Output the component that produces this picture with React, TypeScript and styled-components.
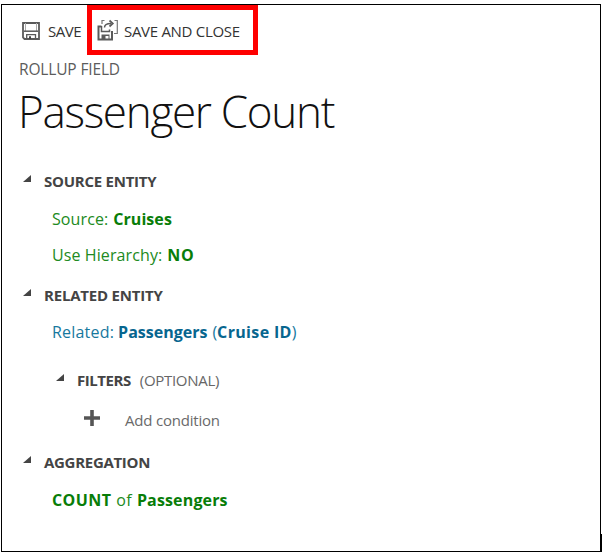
import styled, { createGlobalStyle } from "styled-components";

const GlobalStyle = createGlobalStyle`
  body {
    margin: 0;
    background-color: #fff;
    font-family: "Open Sans", "Noto Sans", sans-serif;
  }
`;

interface TextProps {
  $spacing?: number;
  $gap?: number;
}

const SaveIcon = () => (
  <svg width="18" height="18" viewBox="0 0 18 18" fill="none">
    <path d="M1 1H17V17H2.5L1 15.5Z" stroke="#5a5a5a" strokeWidth="1.8" />
    <path d="M3.5 1V9" stroke="#aaa" strokeWidth="1" />
    <path d="M14.5 1V9" stroke="#aaa" strokeWidth="1" />
    <path d="M2 9.2H16" stroke="#5a5a5a" strokeWidth="1.5" />
    <path d="M4.7 17V12.7H13.5V17" stroke="#5a5a5a" strokeWidth="1.3" />
    <path d="M7 14.3H9V17H7Z" fill="#444" />
  </svg>
);

const SaveCloseIcon = () => (
  <svg width="22" height="22" viewBox="0 0 22 22" fill="none">
    <path d="M4.5 7.5H1.5V20.5H15V12" stroke="#5a5a5a" strokeWidth="2" />
    <path d="M4.5 7V12.5H12.5V10.5" stroke="#5a5a5a" strokeWidth="1.5" />
    <path d="M4.5 20V15.5H12.5V20Z" fill="#5a5a5a" />
    <path d="M8.5 17H11.5V19.5H8.5Z" fill="#fff" />
    <path d="M5 5V1.5H7.5M17.5 1.5H20.3V14.5H17" stroke="#777" strokeWidth="1.2" />
    <path d="M7.5 8.5C7.5 6 9.5 4.5 14 4.5" stroke="#5a5a5a" strokeWidth="1.5" />
    <path d="M12.5 1.5L15.8 4.5L12.5 7.5" stroke="#5a5a5a" strokeWidth="1.7" />
  </svg>
);

const Arrow = () => (
  <svg width="8" height="7" viewBox="0 0 8 7">
    <path d="M8 0V7H0Z" fill="#444" />
  </svg>
);

const App = () => {
  return (
    <Page>
      <GlobalStyle />
      <Panel>
        <Toolbar>
          <ToolButton>
            <SaveIcon />
            <Label $spacing={-0.45}>SAVE</Label>
          </ToolButton>
          <ToolButton className="highlighted">
            <SaveCloseIcon />
            <Label $spacing={-0.3}>SAVE AND CLOSE</Label>
          </ToolButton>
        </Toolbar>
        <Caption>ROLLUP FIELD</Caption>
        <Title>Passenger Count</Title>

        <Heading $top={28}>
          <Arrow />
          <Strong $spacing={-0.25}>SOURCE ENTITY</Strong>
        </Heading>
        <Value $top={14}>
          <Label $spacing={0.1}>Source:</Label>
          <Strong $gap={5} $spacing={0.05}>Cruises</Strong>
        </Value>
        <Value $top={12}>
          <Label $spacing={0.1}>Use Hierarchy:</Label>
          <Strong $gap={5} $spacing={0.7}>NO</Strong>
        </Value>

        <Heading $top={16}>
          <Arrow />
          <Strong $spacing={-0.2}>RELATED ENTITY</Strong>
        </Heading>
        <Value $top={13} className="related">
          <Label $spacing={0.2}>Related:</Label>
          <Strong $gap={4} $spacing={0}>Passengers</Strong>
          <Label $gap={5}>(</Label>
          <Strong $spacing={0.35}>Cruise ID</Strong>
          <Label>)</Label>
        </Value>
        <Heading $top={24} $indent={33}>
          <Arrow />
          <Strong $spacing={-0.45}>FILTERS</Strong>
          <Optional $gap={9} $spacing={-0.3}>(OPTIONAL)</Optional>
        </Heading>
        <Condition>
          <svg width="16" height="16" viewBox="0 0 16 16">
            <path d="M8 0V16M0 8H16" stroke="#555" strokeWidth="3.6" />
          </svg>
          <Label $spacing={-0.2}>Add condition</Label>
        </Condition>

        <Heading $top={18}>
          <Arrow />
          <Strong $spacing={-0.3}>AGGREGATION</Strong>
        </Heading>
        <Value $top={14}>
          <Strong $spacing={0.4}>COUNT</Strong>
          <Label $gap={5} $spacing={0.3}>of</Label>
          <Strong $gap={5} $spacing={0.15}>Passengers</Strong>
        </Value>
      </Panel>
      <Edge />
    </Page>
  );
};

const Page = styled.div`
  display: flex;
  align-items: flex-end;
  box-sizing: border-box;
  width: 603px;
  height: 552px;
  padding: 4px 0 0 1px;
`;

const Panel = styled.main`
  box-sizing: border-box;
  width: 600px;
  height: 548px;
  border: 1px solid #000;
`;

const Edge = styled.div`
  width: 1px;
  height: 18px;
  background-color: #000;
`;

const Toolbar = styled.div`
  display: flex;
  height: 50px;
  padding-left: 20px;
`;

const ToolButton = styled.div`
  display: flex;
  align-items: center;
  box-sizing: border-box;
  width: 65px;
  gap: 8px;
  padding-top: 2px;
  color: #333;
  font-size: 15px;
  line-height: 24px;

  &.highlighted {
    width: 171px;
    gap: 5px;
    padding: 2px 0 0 5px;
    border: 5px solid #fe0000;
  }

  &.highlighted svg {
    margin-top: -2px;
  }
`;

const Label = styled.span<TextProps>`
  margin-left: ${(props) => props.$gap ?? 0}px;
  letter-spacing: ${(props) => props.$spacing ?? 0}px;
  white-space: nowrap;
`;

const Strong = styled(Label)`
  font-weight: 700;
`;

const Optional = styled(Label)`
  color: #666;
`;

const Caption = styled.div`
  margin-top: 2px;
  padding-left: 17px;
  color: #5c5c5c;
  font-size: 15.5px;
  line-height: 24px;
  letter-spacing: -0.15px;
`;

const Title = styled.h1`
  margin: 0;
  padding-left: 16px;
  color: #111;
  font-size: 44px;
  font-weight: 300;
  line-height: 60px;
  letter-spacing: -1.3px;
  white-space: nowrap;
`;

const Heading = styled.div<{ $top: number; $indent?: number }>`
  display: flex;
  align-items: center;
  height: 24px;
  margin-top: ${(props) => props.$top}px;
  padding-left: ${(props) => 21 + (props.$indent ?? 0)}px;
  color: #444;
  font-size: 15px;
  line-height: 24px;

  svg {
    margin: -5px 13px 0 0;
  }
`;

const Value = styled.div<{ $top: number }>`
  display: flex;
  height: 24px;
  margin-top: ${(props) => props.$top}px;
  padding-left: 50px;
  color: #218a21;
  font-size: 16px;
  line-height: 24px;

  ${Strong} {
    color: #087d08;
  }

  &.related {
    color: #17789e;
  }

  &.related ${Strong} {
    color: #07668f;
  }
`;

const Condition = styled.div`
  display: flex;
  align-items: center;
  gap: 25px;
  height: 24px;
  margin-top: 16px;
  padding-left: 82px;
  color: #6a6a6a;
  font-size: 15px;
  line-height: 24px;

  svg {
    margin-top: -5px;
  }
`;

export default App;
